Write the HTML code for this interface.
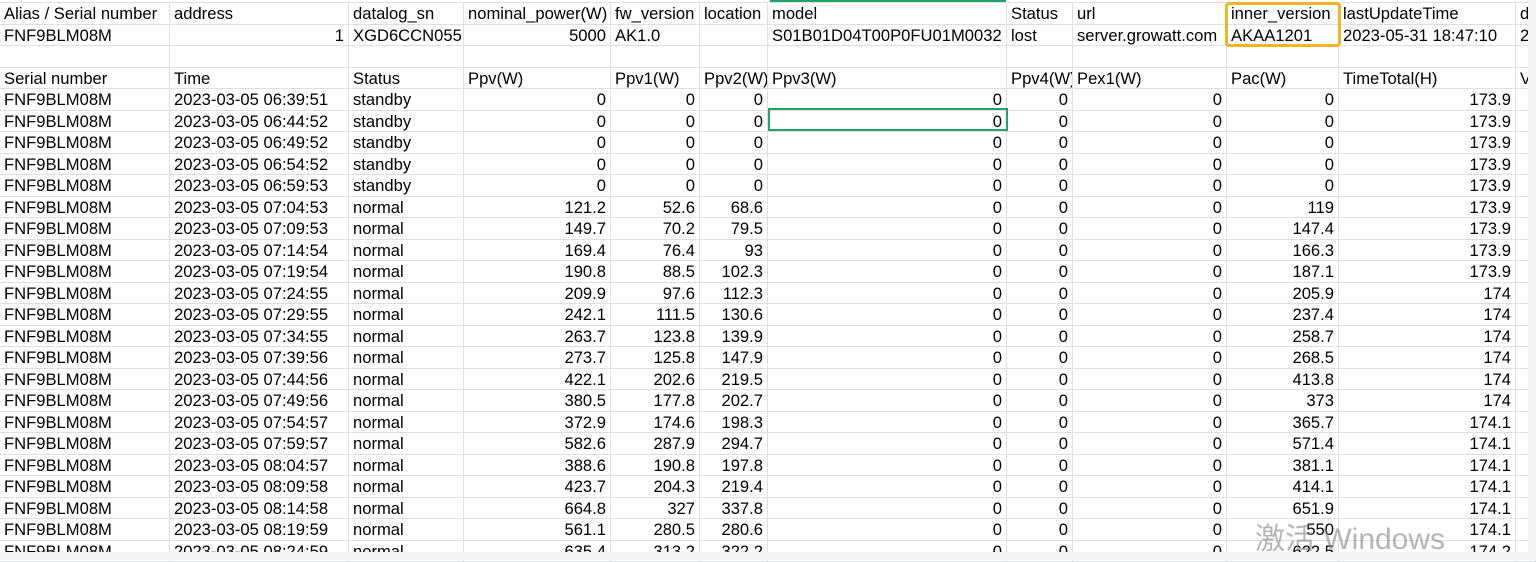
<!DOCTYPE html>
<html><head><meta charset="utf-8"><style>
body{margin:0;width:1536px;height:560px;overflow:hidden;background:#fff;font-family:"Liberation Sans","Noto Sans CJK SC",sans-serif;font-size:16.6px;color:#000;position:relative}
.g{position:absolute;left:0;top:3px}
.r{display:flex;height:21.5px;border-bottom:1px solid #dcdfe3;box-sizing:border-box}
.r div{box-sizing:border-box;border-right:1px solid #dcdfe3;padding:0 4px;line-height:21px;white-space:nowrap;overflow:hidden;flex:none}
.n{text-align:right}
.c1{width:170px}.c2{width:179px}.c3{width:115px}.c4{width:147px}.c5{width:89px}.c6{width:68px}.c7{width:239px}.c8{width:66px}.c9{width:154px}.c10{width:112px}.c11{width:177px}.c12{width:20px}
</style></head><body>
<div class="g">
<div class="r"><div class="c1">Alias / Serial number</div><div class="c2">address</div><div class="c3">datalog_sn</div><div class="c4">nominal_power(W)</div><div class="c5">fw_version</div><div class="c6">location</div><div class="c7">model</div><div class="c8">Status</div><div class="c9">url</div><div class="c10">inner_version</div><div class="c11">lastUpdateTime</div><div class="c12">d</div></div>
<div class="r"><div class="c1">FNF9BLM08M</div><div class="c2 n">1</div><div class="c3">XGD6CCN055</div><div class="c4 n">5000</div><div class="c5">AK1.0</div><div class="c6"></div><div class="c7">S01B01D04T00P0FU01M0032</div><div class="c8">lost</div><div class="c9">server.growatt.com</div><div class="c10">AKAA1201</div><div class="c11">2023-05-31 18:47:10</div><div class="c12">2</div></div>
<div class="r"><div class="c1"></div><div class="c2"></div><div class="c3"></div><div class="c4"></div><div class="c5"></div><div class="c6"></div><div class="c7"></div><div class="c8"></div><div class="c9"></div><div class="c10"></div><div class="c11"></div><div class="c12"></div></div>
<div class="r"><div class="c1">Serial number</div><div class="c2">Time</div><div class="c3">Status</div><div class="c4">Ppv(W)</div><div class="c5">Ppv1(W)</div><div class="c6">Ppv2(W)</div><div class="c7">Ppv3(W)</div><div class="c8">Ppv4(W)</div><div class="c9">Pex1(W)</div><div class="c10">Pac(W)</div><div class="c11">TimeTotal(H)</div><div class="c12">V</div></div>
<div class="r"><div class="c1">FNF9BLM08M</div><div class="c2">2023-03-05 06:39:51</div><div class="c3">standby</div><div class="c4 n">0</div><div class="c5 n">0</div><div class="c6 n">0</div><div class="c7 n">0</div><div class="c8 n">0</div><div class="c9 n">0</div><div class="c10 n">0</div><div class="c11 n">173.9</div><div class="c12"></div></div>
<div class="r"><div class="c1">FNF9BLM08M</div><div class="c2">2023-03-05 06:44:52</div><div class="c3">standby</div><div class="c4 n">0</div><div class="c5 n">0</div><div class="c6 n">0</div><div class="c7 n">0</div><div class="c8 n">0</div><div class="c9 n">0</div><div class="c10 n">0</div><div class="c11 n">173.9</div><div class="c12"></div></div>
<div class="r"><div class="c1">FNF9BLM08M</div><div class="c2">2023-03-05 06:49:52</div><div class="c3">standby</div><div class="c4 n">0</div><div class="c5 n">0</div><div class="c6 n">0</div><div class="c7 n">0</div><div class="c8 n">0</div><div class="c9 n">0</div><div class="c10 n">0</div><div class="c11 n">173.9</div><div class="c12"></div></div>
<div class="r"><div class="c1">FNF9BLM08M</div><div class="c2">2023-03-05 06:54:52</div><div class="c3">standby</div><div class="c4 n">0</div><div class="c5 n">0</div><div class="c6 n">0</div><div class="c7 n">0</div><div class="c8 n">0</div><div class="c9 n">0</div><div class="c10 n">0</div><div class="c11 n">173.9</div><div class="c12"></div></div>
<div class="r"><div class="c1">FNF9BLM08M</div><div class="c2">2023-03-05 06:59:53</div><div class="c3">standby</div><div class="c4 n">0</div><div class="c5 n">0</div><div class="c6 n">0</div><div class="c7 n">0</div><div class="c8 n">0</div><div class="c9 n">0</div><div class="c10 n">0</div><div class="c11 n">173.9</div><div class="c12"></div></div>
<div class="r"><div class="c1">FNF9BLM08M</div><div class="c2">2023-03-05 07:04:53</div><div class="c3">normal</div><div class="c4 n">121.2</div><div class="c5 n">52.6</div><div class="c6 n">68.6</div><div class="c7 n">0</div><div class="c8 n">0</div><div class="c9 n">0</div><div class="c10 n">119</div><div class="c11 n">173.9</div><div class="c12"></div></div>
<div class="r"><div class="c1">FNF9BLM08M</div><div class="c2">2023-03-05 07:09:53</div><div class="c3">normal</div><div class="c4 n">149.7</div><div class="c5 n">70.2</div><div class="c6 n">79.5</div><div class="c7 n">0</div><div class="c8 n">0</div><div class="c9 n">0</div><div class="c10 n">147.4</div><div class="c11 n">173.9</div><div class="c12"></div></div>
<div class="r"><div class="c1">FNF9BLM08M</div><div class="c2">2023-03-05 07:14:54</div><div class="c3">normal</div><div class="c4 n">169.4</div><div class="c5 n">76.4</div><div class="c6 n">93</div><div class="c7 n">0</div><div class="c8 n">0</div><div class="c9 n">0</div><div class="c10 n">166.3</div><div class="c11 n">173.9</div><div class="c12"></div></div>
<div class="r"><div class="c1">FNF9BLM08M</div><div class="c2">2023-03-05 07:19:54</div><div class="c3">normal</div><div class="c4 n">190.8</div><div class="c5 n">88.5</div><div class="c6 n">102.3</div><div class="c7 n">0</div><div class="c8 n">0</div><div class="c9 n">0</div><div class="c10 n">187.1</div><div class="c11 n">173.9</div><div class="c12"></div></div>
<div class="r"><div class="c1">FNF9BLM08M</div><div class="c2">2023-03-05 07:24:55</div><div class="c3">normal</div><div class="c4 n">209.9</div><div class="c5 n">97.6</div><div class="c6 n">112.3</div><div class="c7 n">0</div><div class="c8 n">0</div><div class="c9 n">0</div><div class="c10 n">205.9</div><div class="c11 n">174</div><div class="c12"></div></div>
<div class="r"><div class="c1">FNF9BLM08M</div><div class="c2">2023-03-05 07:29:55</div><div class="c3">normal</div><div class="c4 n">242.1</div><div class="c5 n">111.5</div><div class="c6 n">130.6</div><div class="c7 n">0</div><div class="c8 n">0</div><div class="c9 n">0</div><div class="c10 n">237.4</div><div class="c11 n">174</div><div class="c12"></div></div>
<div class="r"><div class="c1">FNF9BLM08M</div><div class="c2">2023-03-05 07:34:55</div><div class="c3">normal</div><div class="c4 n">263.7</div><div class="c5 n">123.8</div><div class="c6 n">139.9</div><div class="c7 n">0</div><div class="c8 n">0</div><div class="c9 n">0</div><div class="c10 n">258.7</div><div class="c11 n">174</div><div class="c12"></div></div>
<div class="r"><div class="c1">FNF9BLM08M</div><div class="c2">2023-03-05 07:39:56</div><div class="c3">normal</div><div class="c4 n">273.7</div><div class="c5 n">125.8</div><div class="c6 n">147.9</div><div class="c7 n">0</div><div class="c8 n">0</div><div class="c9 n">0</div><div class="c10 n">268.5</div><div class="c11 n">174</div><div class="c12"></div></div>
<div class="r"><div class="c1">FNF9BLM08M</div><div class="c2">2023-03-05 07:44:56</div><div class="c3">normal</div><div class="c4 n">422.1</div><div class="c5 n">202.6</div><div class="c6 n">219.5</div><div class="c7 n">0</div><div class="c8 n">0</div><div class="c9 n">0</div><div class="c10 n">413.8</div><div class="c11 n">174</div><div class="c12"></div></div>
<div class="r"><div class="c1">FNF9BLM08M</div><div class="c2">2023-03-05 07:49:56</div><div class="c3">normal</div><div class="c4 n">380.5</div><div class="c5 n">177.8</div><div class="c6 n">202.7</div><div class="c7 n">0</div><div class="c8 n">0</div><div class="c9 n">0</div><div class="c10 n">373</div><div class="c11 n">174</div><div class="c12"></div></div>
<div class="r"><div class="c1">FNF9BLM08M</div><div class="c2">2023-03-05 07:54:57</div><div class="c3">normal</div><div class="c4 n">372.9</div><div class="c5 n">174.6</div><div class="c6 n">198.3</div><div class="c7 n">0</div><div class="c8 n">0</div><div class="c9 n">0</div><div class="c10 n">365.7</div><div class="c11 n">174.1</div><div class="c12"></div></div>
<div class="r"><div class="c1">FNF9BLM08M</div><div class="c2">2023-03-05 07:59:57</div><div class="c3">normal</div><div class="c4 n">582.6</div><div class="c5 n">287.9</div><div class="c6 n">294.7</div><div class="c7 n">0</div><div class="c8 n">0</div><div class="c9 n">0</div><div class="c10 n">571.4</div><div class="c11 n">174.1</div><div class="c12"></div></div>
<div class="r"><div class="c1">FNF9BLM08M</div><div class="c2">2023-03-05 08:04:57</div><div class="c3">normal</div><div class="c4 n">388.6</div><div class="c5 n">190.8</div><div class="c6 n">197.8</div><div class="c7 n">0</div><div class="c8 n">0</div><div class="c9 n">0</div><div class="c10 n">381.1</div><div class="c11 n">174.1</div><div class="c12"></div></div>
<div class="r"><div class="c1">FNF9BLM08M</div><div class="c2">2023-03-05 08:09:58</div><div class="c3">normal</div><div class="c4 n">423.7</div><div class="c5 n">204.3</div><div class="c6 n">219.4</div><div class="c7 n">0</div><div class="c8 n">0</div><div class="c9 n">0</div><div class="c10 n">414.1</div><div class="c11 n">174.1</div><div class="c12"></div></div>
<div class="r"><div class="c1">FNF9BLM08M</div><div class="c2">2023-03-05 08:14:58</div><div class="c3">normal</div><div class="c4 n">664.8</div><div class="c5 n">327</div><div class="c6 n">337.8</div><div class="c7 n">0</div><div class="c8 n">0</div><div class="c9 n">0</div><div class="c10 n">651.9</div><div class="c11 n">174.1</div><div class="c12"></div></div>
<div class="r"><div class="c1">FNF9BLM08M</div><div class="c2">2023-03-05 08:19:59</div><div class="c3">normal</div><div class="c4 n">561.1</div><div class="c5 n">280.5</div><div class="c6 n">280.6</div><div class="c7 n">0</div><div class="c8 n">0</div><div class="c9 n">0</div><div class="c10 n">550</div><div class="c11 n">174.1</div><div class="c12"></div></div>
<div class="r"><div class="c1">FNF9BLM08M</div><div class="c2">2023-03-05 08:24:59</div><div class="c3">normal</div><div class="c4 n">635.4</div><div class="c5 n">313.2</div><div class="c6 n">322.2</div><div class="c7 n">0</div><div class="c8 n">0</div><div class="c9 n">0</div><div class="c10 n">622.5</div><div class="c11 n">174.2</div><div class="c12"></div></div>
</div>
<div style="position:absolute;left:0;top:0;width:1536px;height:3px;background:#fff;border-bottom:1px solid #dcdfe3;box-sizing:border-box"></div>
<div style="position:absolute;left:770px;top:0;width:236px;height:2px;background:#21a366"></div>
<div style="position:absolute;left:768px;top:108px;width:240px;height:23px;border:2px solid #21a366;box-sizing:border-box"></div>
<div style="position:absolute;left:1225px;top:2px;width:116px;height:45px;border:3px solid #f5b324;border-radius:4px;box-sizing:border-box"></div>
<div style="position:absolute;left:1528px;top:0;width:8px;height:560px;background:#f3f3f3"></div>
<div style="position:absolute;left:0;top:552px;width:1536px;height:8px;background:#f3f3f3"></div>
<div style="position:absolute;left:1255px;top:514px;font-size:30px;color:rgba(120,120,120,0.55)">激活 Windows</div>
</body></html>
